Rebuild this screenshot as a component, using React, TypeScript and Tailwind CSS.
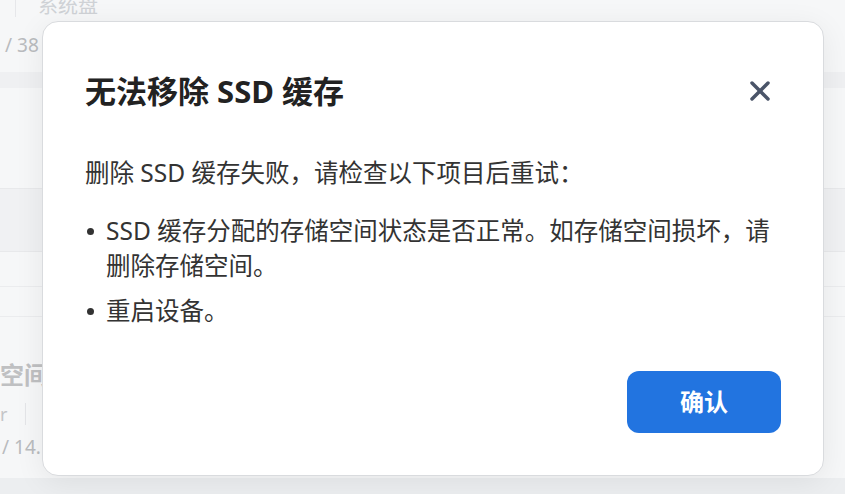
import { X } from "lucide-react";

const font = "font-['Noto_Sans','Noto_Sans_CJK_SC',sans-serif]";

function BackgroundPage() {
  return (
    <div className="flex flex-col h-full w-full bg-[#f6f7f8]">
      <div className="flex items-center h-[20px] -mt-[4px]">
        <div className="w-[1px] h-[22px] bg-[#e6e7ea] ml-[15px]" />
        <span className="ml-[22px] text-[20px] leading-[22px] text-[#cfd2d6]">系统盘</span>
      </div>
      <div className="h-[56px] pt-[17px] pl-[5px] text-[19px] leading-[24px] text-[#b9bbbe]">/ 38</div>
      <div className="h-[16px] bg-[#eff0f2]" />
      <div className="h-[100px]" />
      <div className="h-[1px] bg-[#e8e9eb]" />
      <div className="h-[62px] bg-[#f0f1f3]" />
      <div className="h-[1px] bg-[#e8e9eb]" />
      <div className="h-[34px]" />
      <div className="h-[1px] bg-[#ebecee]" />
      <div className="h-[29px]" />
      <div className="h-[1px] bg-[#ebecee]" />
      <div className="h-[44px]" />
      <div className="text-[24px] leading-[28px] font-bold text-[#bfc0c2]">空间</div>
      <div className="flex items-center h-[34px] mt-[8px]">
        <span className="text-[18px] text-[#c4c5c7]">r</span>
        <div className="w-[1px] h-[22px] bg-[#e4e5e8] ml-[18px]" />
      </div>
      <div className="pl-[2px] mt-[4px] text-[19px] leading-[24px] text-[#b9bbbe]">/ 14.</div>
      <div className="flex-1" />
      <div className="h-[16px] bg-[#eceef0]" />
    </div>
  );
}

export default function App() {
  return (
    <div className={`relative h-[494px] w-full overflow-hidden ${font}`}>
      <BackgroundPage />
      <div className="absolute left-[42px] top-[21px] w-[782px] h-[455px] flex flex-col rounded-[16px] border border-[#d9dbde] bg-white px-[42px] pb-[42px] shadow-[0_6px_30px_rgba(0,0,0,0.07)]">
        <div className="flex items-center justify-between pt-[49px]">
          <h2 className="text-[31px] leading-[40px] font-bold text-[#222]">无法移除 SSD 缓存</h2>
          <button className="flex items-center justify-center w-8 h-8 mr-[5px] text-[#4a5468]">
            <X size={36} strokeWidth={2.6} />
          </button>
        </div>

        <p className="mt-[44px] text-[24.5px] leading-[35px] text-[#333]">
          删除 SSD 缓存失败，请检查以下项目后重试：
        </p>

        <ul className="mt-[23px] space-y-[10px] text-[24.5px] leading-[35px] text-[#333]">
          <li className="flex">
            <span className="w-[21px] shrink-0 flex pt-[15px]">
              <span className="ml-[2px] w-[7px] h-[7px] rounded-full bg-[#333]" />
            </span>
            <span>SSD 缓存分配的存储空间状态是否正常。如存储空间损坏，请删除存储空间。</span>
          </li>
          <li className="flex">
            <span className="w-[21px] shrink-0 flex pt-[15px]">
              <span className="ml-[2px] w-[7px] h-[7px] rounded-full bg-[#333]" />
            </span>
            <span>重启设备。</span>
          </li>
        </ul>

        <div className="mt-auto flex justify-end">
          <button className="w-[154px] h-[62px] rounded-[12px] bg-[#2274e0] text-white text-[24px] font-bold">
            确认
          </button>
        </div>
      </div>
    </div>
  );
}
